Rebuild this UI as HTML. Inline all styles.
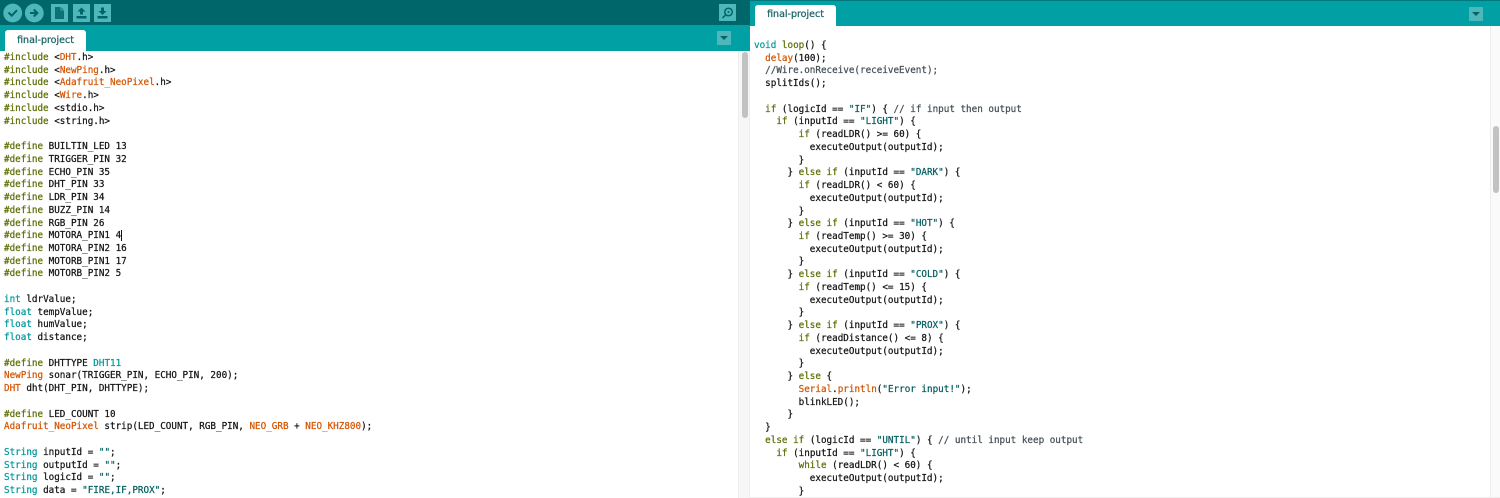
<!DOCTYPE html>
<html><head><meta charset="utf-8"><style>
html,body{margin:0;padding:0;width:1500px;height:498px;overflow:hidden;background:#fff}
div{position:absolute;box-sizing:border-box}
.code{font:9.27px/12.74px "DejaVu Sans Mono","Liberation Mono",monospace;color:#111;white-space:pre;margin:0;position:absolute;filter:blur(.25px);-webkit-text-stroke:.22px currentColor}
.d{color:#5e6d03}.o{color:#d35400}.t{color:#00979c}.g{color:#434f54}.s{color:#005c5f}
.tab{background:#fff;border-radius:3px 3px 0 0;font:normal 9.5px "DejaVu Sans","Liberation Sans",sans-serif;color:#1d6668;text-align:center;-webkit-text-stroke:.25px #1d6668}
.btn{background:#4db7bb}
</style></head><body>
<div style="left:0;top:0;width:750px;height:25px;background:#00666a"></div>
<div style="left:0;top:25px;width:750px;height:26px;background:#00a0a4"></div>
<div style="left:738px;top:51px;width:12px;height:447px;background:#f7f7f7;border-left:1px solid #eee;border-right:1px solid #eee"></div>
<div style="left:750px;top:0;width:750px;height:26px;background:#00a0a4"></div>
<div style="left:750px;top:0;width:750px;height:1px;background:#00777b"></div>

<svg style="position:absolute;left:0;top:0" width="750" height="26">
<circle cx="12.700" cy="13" r="9.400" fill="#4db7bb"/><path d="M8.500 12.500l3.200 3.200 5.300-5.500" fill="none" stroke="#006468" stroke-width="2"/>
<circle cx="34.300" cy="13" r="9.400" fill="#4db7bb"/><path d="M30 13h7M33.800 9.500l3.500 3.500-3.500 3.500" fill="none" stroke="#006468" stroke-width="2"/>
<rect x="51" y="4" width="17" height="18" fill="#4db7bb"/><path d="M55 7h6l3 3v9h-9z" fill="#0a7275"/><path d="M61 7v3h3" fill="none" stroke="#4db7bb" stroke-width=".8"/>
<rect x="73" y="4" width="17" height="18" fill="#4db7bb"/><path d="M81.500 7.500l4 4h-2.500v3h-3v-3h-2.500zM76.500 16h10v2.500h-10z" fill="#006468"/>
<rect x="94" y="4" width="17" height="18" fill="#4db7bb"/><path d="M102.500 15l4-4h-2.500v-3.500h-3v3.500h-2.500zM97.500 16h10v2.500h-10z" fill="#006468"/>
<rect x="719" y="4" width="17" height="17" fill="#4db7bb"/><circle cx="728.500" cy="12" r="3.800" fill="none" stroke="#006468" stroke-width="1.500"/><path d="M725.500 15l-3 3" stroke="#006468" stroke-width="1.500"/><circle cx="728.500" cy="12" r="1" fill="#006468"/>
</svg>
<div class="tab" style="left:5px;top:30px;width:81px;height:21px;line-height:21px">final-project</div>
<div class="tab" style="left:755px;top:5px;width:81px;height:21px;line-height:20px">final-project</div>
<div class="btn" style="left:717px;top:31px;width:14px;height:14px"></div>
<div style="left:720px;top:36px;width:0;height:0;border:4px solid transparent;border-top:4px solid #006468;border-bottom:0"></div>
<div class="btn" style="left:1469px;top:7px;width:14px;height:14px"></div>
<div style="left:1472px;top:12px;width:0;height:0;border:4px solid transparent;border-top:4px solid #006468;border-bottom:0"></div>

<div style="left:742px;top:52px;width:6px;height:66px;border-radius:3px;background:#c2c2c2"></div>
<div style="left:1490px;top:26px;width:10px;height:472px;background:#fafafa;border-left:1px solid #ececec"></div>
<div style="left:1493px;top:126px;width:6px;height:67px;border-radius:3px;background:#c2c2c2"></div>
<div style="left:750px;top:497px;width:750px;height:1px;background:#eee"></div>

<pre class="code" style="left:4px;top:52px"><span class="d">#include</span> &lt;<span class="o">DHT</span>.h&gt;
<span class="d">#include</span> &lt;<span class="o">NewPing</span>.h&gt;
<span class="d">#include</span> &lt;<span class="o">Adafruit_NeoPixel</span>.h&gt;
<span class="d">#include</span> &lt;<span class="o">Wire</span>.h&gt;
<span class="d">#include</span> &lt;stdio.h&gt;
<span class="d">#include</span> &lt;string.h&gt;

<span class="d">#define</span> BUILTIN_LED 13
<span class="d">#define</span> TRIGGER_PIN 32
<span class="d">#define</span> ECHO_PIN 35
<span class="d">#define</span> DHT_PIN 33
<span class="d">#define</span> LDR_PIN 34
<span class="d">#define</span> BUZZ_PIN 14
<span class="d">#define</span> RGB_PIN 26
<span class="d">#define</span> MOTORA_PIN1 4
<span class="d">#define</span> MOTORA_PIN2 16
<span class="d">#define</span> MOTORB_PIN1 17
<span class="d">#define</span> MOTORB_PIN2 5

<span class="t">int</span> ldrValue;
<span class="t">float</span> tempValue;
<span class="t">float</span> humValue;
<span class="t">float</span> distance;

<span class="d">#define</span> DHTTYPE <span class="t">DHT11</span>
<span class="o">NewPing</span> sonar(TRIGGER_PIN, ECHO_PIN, 200);
<span class="o">DHT</span> dht(DHT_PIN, DHTTYPE);

<span class="d">#define</span> LED_COUNT 10
<span class="o">Adafruit_NeoPixel</span> strip(LED_COUNT, RGB_PIN, <span class="o">NEO_GRB</span> + <span class="o">NEO_KHZ800</span>);

<span class="t">String</span> inputId = <span class="s">""</span>;
<span class="t">String</span> outputId = <span class="s">""</span>;
<span class="t">String</span> logicId = <span class="s">""</span>;
<span class="t">String</span> data = <span class="s">"FIRE,IF,PROX"</span>;</pre>
<div style="left:121px;top:230px;width:1px;height:11px;background:#111"></div>

<pre class="code" style="left:754px;top:40px"><span class="t">void</span> <span class="d">loop</span>() {
  <span class="o">delay</span>(100);
  <span class="g">//Wire.onReceive(receiveEvent);</span>
  splitIds();

  <span class="d">if</span> (logicId == <span class="s">"IF"</span>) { <span class="g">// if input then output</span>
    <span class="d">if</span> (inputId == <span class="s">"LIGHT"</span>) {
        <span class="d">if</span> (readLDR() &gt;= 60) {
          executeOutput(outputId);
        }
      } <span class="d">else if</span> (inputId == <span class="s">"DARK"</span>) {
        <span class="d">if</span> (readLDR() &lt; 60) {
          executeOutput(outputId);
        }
      } <span class="d">else if</span> (inputId == <span class="s">"HOT"</span>) {
        <span class="d">if</span> (readTemp() &gt;= 30) {
          executeOutput(outputId);
        }
      } <span class="d">else if</span> (inputId == <span class="s">"COLD"</span>) {
        <span class="d">if</span> (readTemp() &lt;= 15) {
          executeOutput(outputId);
        }
      } <span class="d">else if</span> (inputId == <span class="s">"PROX"</span>) {
        <span class="d">if</span> (readDistance() &lt;= 8) {
          executeOutput(outputId);
        }
      } <span class="d">else</span> {
        <span class="o">Serial</span>.<span class="o">println</span>(<span class="s">"Error input!"</span>);
        blinkLED();
      }
  }
  <span class="d">else if</span> (logicId == <span class="s">"UNTIL"</span>) { <span class="g">// until input keep output</span>
    <span class="d">if</span> (inputId == <span class="s">"LIGHT"</span>) {
        <span class="d">while</span> (readLDR() &lt; 60) {
          executeOutput(outputId);
        }</pre>
</body></html>
